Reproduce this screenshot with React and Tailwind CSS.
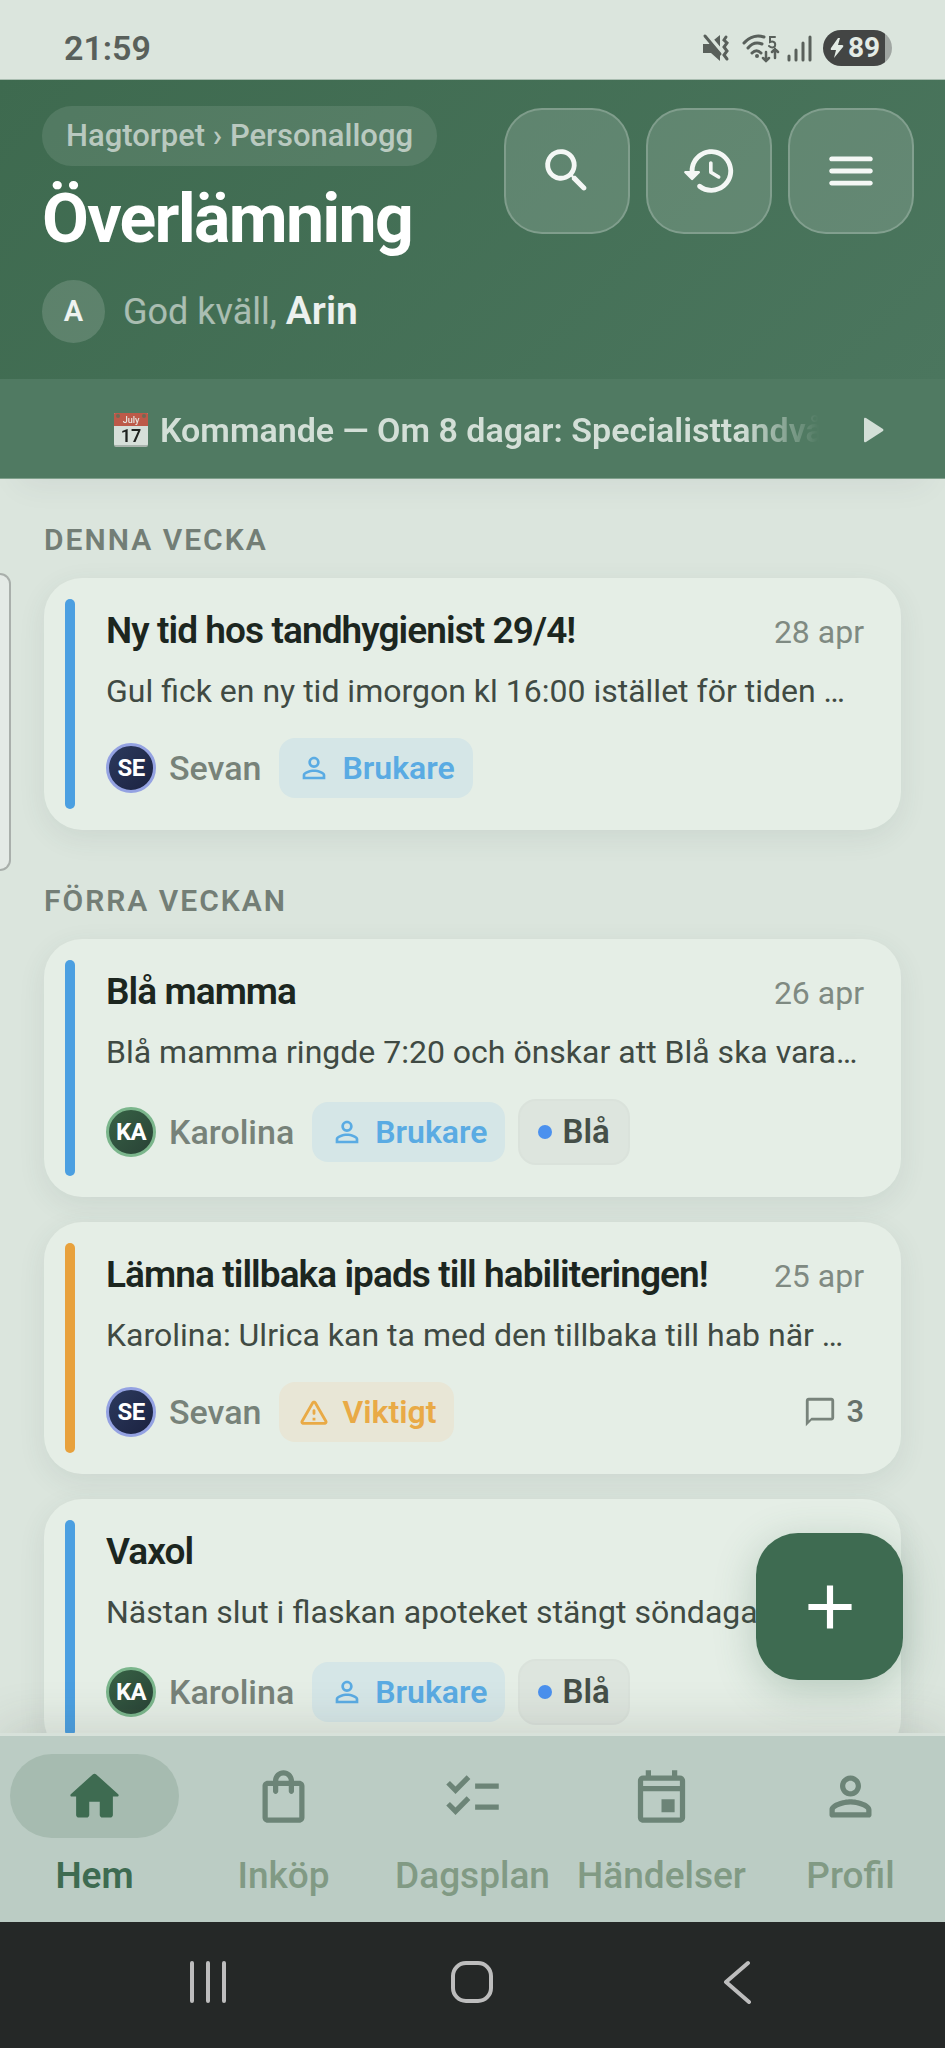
import { MdChatBubbleOutline, MdChecklist, MdOutlineShoppingBag, MdPersonOutline } from 'react-icons/md';
import clsx from 'clsx';

const Icon = ({ path, className }) => (
  <svg viewBox="0 0 24 24" fill="currentColor" aria-hidden="true" className={className}>
    <path d={path} />
  </svg>
);

const icons = {
  search: 'M15.5 14h-.79l-.28-.27c1.2-1.4 1.82-3.31 1.48-5.34-.47-2.78-2.79-5-5.59-5.34-4.23-.52-7.79 3.04-7.27 7.27.34 2.8 2.56 5.12 5.34 5.59 2.03.34 3.94-.28 5.34-1.48l.27.28v.79l4.25 4.25c.41.41 1.08.41 1.49 0 .41-.41.41-1.08 0-1.49L15.5 14zm-6 0C7.01 14 5 11.99 5 9.5S7.01 5 9.5 5 14 7.01 14 9.5 11.99 14 9.5 14z',
  history: 'M13.26 3C8.17 2.86 4 6.95 4 12H2.21c-.45 0-.67.54-.35.85l2.79 2.8c.2.2.51.2.71 0l2.79-2.8c.31-.31.09-.85-.36-.85H6c0-3.9 3.18-7.05 7.1-7 3.72.05 6.85 3.18 6.9 6.9.05 3.91-3.1 7.1-7 7.1-1.61 0-3.1-.55-4.28-1.48-.4-.31-.96-.28-1.32.08-.42.42-.39 1.13.08 1.49C9 20.29 10.91 21 13 21c5.05 0 9.14-4.17 9-9.26-.13-4.69-4.05-8.61-8.74-8.74zm-.51 5c-.41 0-.75.34-.75.75v3.68c0 .35.19.68.49.86l3.12 1.85c.36.21.82.09 1.03-.26.21-.36.09-.82-.26-1.03l-2.88-1.71v-3.4c0-.4-.34-.74-.75-.74z',
  menu: 'M4 18h16c.55 0 1-.45 1-1s-.45-1-1-1H4c-.55 0-1 .45-1 1s.45 1 1 1zm0-5h16c.55 0 1-.45 1-1s-.45-1-1-1H4c-.55 0-1 .45-1 1s.45 1 1 1zM3 7c0 .55.45 1 1 1h16c.55 0 1-.45 1-1s-.45-1-1-1H4c-.55 0-1 .45-1 1z',
  home: 'M10 19v-5h4v5c0 .55.45 1 1 1h3c.55 0 1-.45 1-1v-7h1.7c.46 0 .68-.57.33-.87L12.67 3.6c-.38-.34-.96-.34-1.34 0l-8.36 7.53c-.34.3-.13.87.33.87H5v7c0 .55.45 1 1 1h3c.55 0 1-.45 1-1z',
  event: 'M19 4h-1V2h-2v2H8V2H6v2H5c-1.11 0-1.99.9-1.99 2L3 20c0 1.1.89 2 2 2h14c1.1 0 2-.9 2-2V6c0-1.1-.9-2-2-2zm0 16H5V10h14v10zm0-12H5V6h14v2zm-7 5h5v5h-5v-5z',
  profile: 'M12 6c1.1 0 2 .9 2 2s-.9 2-2 2-2-.9-2-2 .9-2 2-2m0 9c2.7 0 5.8 1.29 6 2v1H6v-.99c.2-.72 3.3-2.01 6-2.01m0-11C9.79 4 8 5.79 8 8s1.79 4 4 4 4-1.79 4-4-1.79-4-4-4zm0 9c-2.67 0-8 1.34-8 4v2c0 .55.45 1 1 1h14c.55 0 1-.45 1-1v-2c0-2.66-5.33-4-8-4z',
  warning: 'M12 5.99 19.53 19H4.47L12 5.99M2.74 18c-.77 1.33.19 3 1.73 3h15.06c1.54 0 2.5-1.67 1.73-3L13.73 4.99c-.77-1.33-2.69-1.33-3.46 0L2.74 18zM11 11v2c0 .55.45 1 1 1s1-.45 1-1v-2c0-.55-.45-1-1-1s-1 .45-1 1zm0 5h2v2h-2z',
  add: 'M19 13h-6v6h-2v-6H5v-2h6V5h2v6h6v2z',
};

const people = {
  Sevan: { initials: 'SE', color: 'border-[#94a2e2] bg-linear-to-br from-[#2c3a5e] to-[#1b2240]' },
  Karolina: { initials: 'KA', color: 'border-[#7bb68c] bg-linear-to-br from-[#376245] to-[#294236]' },
};

const sections = [
  {
    label: 'Denna vecka',
    posts: [
      { id: 1, title: 'Ny tid hos tandhygienist 29/4!', date: '28 apr', text: 'Gul fick en ny tid imorgon kl 16:00 istället för tiden …', author: 'Sevan', tag: 'Brukare' },
    ],
  },
  {
    label: 'Förra veckan',
    posts: [
      { id: 2, title: 'Blå mamma', date: '26 apr', text: 'Blå mamma ringde 7:20 och önskar att Blå ska vara…', author: 'Karolina', tag: 'Brukare', client: 'Blå' },
      { id: 3, title: 'Lämna tillbaka ipads till habiliteringen!', date: '25 apr', text: 'Karolina: Ulrica kan ta med den tillbaka till hab när …', author: 'Sevan', tag: 'Viktigt', comments: 3 },
      { id: 4, title: 'Vaxol', date: '', text: 'Nästan slut i flaskan apoteket stängt söndagar', author: 'Karolina', tag: 'Brukare', client: 'Blå' },
    ],
  },
];

const StatusBar = () => (
  <div className="flex h-20 shrink-0 items-center justify-between border-b border-[#a9bdb0] pr-[53px] pl-[64px] pt-[16px] text-[#59605b]">
    <span className="text-[34px] leading-[40px] font-semibold">21:59</span>
    <div className="flex items-center">
      <svg viewBox="0 0 110 36" className="mr-[11px] h-[36px] w-[110px]" fill="none" stroke="currentColor" strokeLinecap="round" aria-hidden="true">
        {/* muted speaker with vibration marks */}
        <path d="M1 14h6l11-9v26l-9-8H1z" fill="currentColor" stroke="none" />
        <path d="M4 3l16 19" stroke="#dbe5dd" strokeWidth="4" />
        <path d="M3 6l15 18" strokeWidth="3" />
        <path d="M24 7l-2 3 3 3-3 4 3 4-3 4 3 4" strokeWidth="3" />
        {/* wifi 5 */}
        <path d="M42 13c6-7 14-8 20-6M46 18c4-5 9-6 14-4M50 23c3-3 6-3 9 0" strokeWidth="3" />
        <circle cx="55" cy="26" r="2" fill="currentColor" stroke="none" />
        <path d="M73 7h-5v5c3-1 6 0 5 4-1 2-4 2-6 0" strokeWidth="2" />
        <path d="M64 22v9m-3-3l3 3 3-3M73 28v-9m-3 3l3-3 3 3" strokeWidth="2.5" />
        {/* signal */}
        <path d="M87 26v4M94 20v10M101 13v17M108 7v23" strokeWidth="3" />
      </svg>
      <div className="flex h-[36px] w-[69px] items-center gap-[4px] overflow-hidden rounded-full bg-linear-to-r from-[#434544] from-90% to-[#a0a6a2] to-90% pl-[7px] text-[#e3ebe5]">
        <svg viewBox="0 0 14 20" className="h-[20px] w-[14px]" fill="currentColor" aria-hidden="true">
          <path d="M8 0L1 10q-1 2 1 2h4l-2 8 9-11q1-2-1-2H8l2-7z" />
        </svg>
        <span className="text-[28px] leading-[36px] font-bold">89</span>
      </div>
    </div>
  </div>
);

const HeaderButton = ({ icon, label }) => (
  <button
    type="button"
    aria-label={label}
    className="flex size-[126px] items-center justify-center rounded-[38px] border-2 border-white/20 bg-white/15 text-[#f4f7f5]"
  >
    <Icon path={icon} className="size-[58px]" />
  </button>
);

const Header = () => (
  <header className="flex shrink-0 items-start justify-between bg-linear-135 from-[#3e6a4f] to-[#4b765e] pt-[26px] pr-[31px] pb-9 pl-[42px]">
    <div>
      <a href="#personallogg" className="block w-fit rounded-full bg-white/10 px-6 text-[31px] leading-[60px] font-medium text-white/60">
        Hagtorpet › Personallogg
      </a>
      <h1 className="mt-3 text-[68px] leading-[82px] font-bold tracking-tight text-white">Överlämning</h1>
      <div className="mt-5 flex items-center gap-[18px]">
        <span className="flex size-[63px] items-center justify-center rounded-full bg-white/15 text-[29px] font-semibold text-white/90">A</span>
        <p className="text-[36px] leading-[48px] text-white/55">
          God kväll, <strong className="text-[39px] font-semibold text-white/90">Arin</strong>
        </p>
      </div>
    </div>
    <div className="mt-[2px] flex gap-4">
      <HeaderButton icon={icons.search} label="Sök" />
      <HeaderButton icon={icons.history} label="Historik" />
      <HeaderButton icon={icons.menu} label="Meny" />
    </div>
  </header>
);

const Ticker = () => (
  <div className="relative flex h-[100px] shrink-0 items-center border-b border-[#80a08c] bg-[#507a62] pt-[2px] pr-[51px] pl-[42px] text-[#d3dfd7] shadow-[0_24px_32px_-20px_rgba(60,70,90,0.08)]">
    <div className="flex min-w-0 flex-1 items-center gap-3 overflow-hidden pl-[72px] [mask-image:linear-gradient(to_right,black_90%,transparent)]">
      <svg viewBox="0 0 34 34" className="size-[34px] shrink-0" aria-hidden="true">
        <rect x="0" y="2" width="34" height="32" rx="2" fill="#a9b4ad" />
        <rect x="0" y="0" width="34" height="32" rx="1" fill="#d6dfd9" />
        <path d="M0 1q0-1 1-1h32q1 0 1 1v12H0z" fill="#bd5a49" />
        <circle cx="4" cy="3" r="2" fill="#6f6a55" />
        <circle cx="30" cy="3" r="2" fill="#6f6a55" />
        <text x="17" y="10" textAnchor="middle" fontSize="9" fontWeight="500" fill="#e6e6e0">July</text>
        <text x="17" y="29" textAnchor="middle" fontSize="18" fontWeight="600" fill="#1d211e">17</text>
      </svg>
      <span className="text-[34px] leading-[48px] font-semibold whitespace-nowrap">
        Kommande — Om 8 dagar: Specialisttandvård
      </span>
    </div>
    <button type="button" aria-label="Nästa" className="ml-[35px] flex h-[48px] w-[40px] shrink-0 items-center justify-center">
      <svg viewBox="0 0 20 26" className="h-[26px] w-[20px]" fill="currentColor">
        <path d="M0 2q0-2 2-1l17 11q1 1 0 2L2 25q-2 1-2-1z" />
      </svg>
    </button>
  </div>
);

const Tag = ({ kind }) => (
  <span
    className={clsx(
      'flex h-[60px] items-center gap-[11px] rounded-[16px] px-[18px] text-[32px] font-semibold',
      kind === 'Viktigt' ? 'bg-[#e8e6d6] text-[#e9aa46]' : 'bg-[#d5e6e7] text-[#5aabe3]'
    )}
  >
    {kind === 'Viktigt' ? <Icon path={icons.warning} className="size-[34px]" /> : <MdPersonOutline className="size-[34px]" />}
    {kind}
  </span>
);

const PostCard = ({ post }) => {
  const person = people[post.author];
  return (
    <article className="flex rounded-[38px] bg-[#e5eee6] pr-[37px] pl-[21px] shadow-[0_8px_28px_rgba(60,80,80,0.09)]">
      <div className={clsx('my-[21px] w-[10px] shrink-0 rounded-full', post.tag === 'Viktigt' ? 'bg-[#e8a13c]' : 'bg-[#4b9fe1]')} />
      <div className="min-w-0 flex-1 pt-[29px] pb-8 pl-[31px]">
        <div className="flex h-[48px] items-baseline justify-between">
          <h3 className="truncate text-[37px] leading-[48px] font-semibold tracking-tight text-[#1c261f]">{post.title}</h3>
          <time className="shrink-0 text-[32px] leading-[48px] text-[#7f8a82]">{post.date}</time>
        </div>
        <p className="mt-3 truncate text-[32px] leading-[48px] text-[#404a43]">{post.text}</p>
        <div className="mt-[23px] flex items-center">
          <span className={clsx('flex size-[50px] shrink-0 items-center justify-center rounded-full border-3 text-[24px] font-bold tracking-tight text-white', person.color)}>
            {person.initials}
          </span>
          <span className="mr-[18px] ml-[13px] text-[34px] leading-[48px] font-medium text-[#778279]">{post.author}</span>
          <Tag kind={post.tag} />
          {post.client && (
            <span className="ml-[13px] flex h-[66px] items-center gap-[10px] rounded-[18px] border-2 border-[#dae2db] bg-[#dde5de] px-[18px] text-[33px] font-semibold text-[#454f48]">
              <span className="size-[14px] rounded-full bg-[#4b91ee]" />
              {post.client}
            </span>
          )}
          {post.comments && (
            <span className="ml-auto flex items-center gap-[9px] text-[31px] font-medium text-[#66716a]">
              <MdChatBubbleOutline className="size-[34px] text-[#78837b]" />
              {post.comments}
            </span>
          )}
        </div>
      </div>
    </article>
  );
};

const tabs = [
  { label: 'Hem', icon: <Icon path={icons.home} className="size-[63px]" />, active: true },
  { label: 'Inköp', icon: <MdOutlineShoppingBag className="size-[63px]" /> },
  { label: 'Dagsplan', icon: <MdChecklist className="size-[63px]" /> },
  { label: 'Händelser', icon: <Icon path={icons.event} className="size-[63px]" /> },
  { label: 'Profil', icon: <Icon path={icons.profile} className="size-[63px]" /> },
];

const BottomNav = () => (
  <nav className="relative grid shrink-0 grid-cols-5 border-t-3 border-[#d7e1da] bg-[#bbccc4] pt-[18px] pb-[22px] shadow-[0_-8px_44px_rgba(60,60,50,0.14)]">
    {tabs.map((tab) => (
      <button key={tab.label} type="button" className={clsx('px-[10px]', tab.active ? 'text-[#3e6b51]' : 'text-[#6c8477]')}>
        <span className={clsx('flex h-[84px] items-center justify-center rounded-full', tab.active && 'bg-[#a6bbb0]')}>{tab.icon}</span>
        <span className={clsx('mt-[14px] flex justify-center text-[37px] leading-[48px]', tab.active ? 'font-semibold' : 'font-medium text-[#819a84]')}>
          {tab.label}
        </span>
      </button>
    ))}
  </nav>
);

const SystemNav = () => (
  <div className="relative grid h-[126px] shrink-0 grid-cols-3 items-center bg-[#252827] px-[76px] pb-[6px] text-[#bdbdbd]">
    <button type="button" aria-label="Senaste appar" className="flex justify-center">
      <svg viewBox="0 0 44 44" className="size-11" fill="none" stroke="currentColor" strokeWidth="4" strokeLinecap="round">
        <path d="M6 3v38M22 3v38M38 3v38" />
      </svg>
    </button>
    <button type="button" aria-label="Hemskärm" className="flex justify-center">
      <svg viewBox="0 0 44 44" className="size-11" fill="none" stroke="currentColor" strokeWidth="4">
        <rect x="3" y="3" width="38" height="38" rx="13" />
      </svg>
    </button>
    <button type="button" aria-label="Tillbaka" className="flex justify-center">
      <svg viewBox="0 0 44 44" className="size-11" fill="none" stroke="currentColor" strokeWidth="4" strokeLinecap="round" strokeLinejoin="round">
        <path d="M33 3L11 22l23 20" />
      </svg>
    </button>
  </div>
);

export default function App() {
  return (
    <div className="relative flex h-screen flex-col overflow-hidden bg-[#dbe5dd] font-['Roboto',sans-serif]">
      <StatusBar />
      <Header />
      <Ticker />
      <main className="min-h-0 flex-1 overflow-y-auto px-11 pt-[41px] [scrollbar-width:none]">
        {sections.map((section) => (
          <section key={section.label} className="mb-[51px]">
            <h2 className="mb-[18px] text-[30px] leading-[40px] font-semibold tracking-[2px] text-[#737e76] uppercase">{section.label}</h2>
            <div className="flex flex-col gap-[25px]">
              {section.posts.map((post) => (
                <PostCard key={post.id} post={post} />
              ))}
            </div>
          </section>
        ))}
      </main>
      <div className="relative">
        <button
          type="button"
          aria-label="Nytt inlägg"
          className="absolute right-[42px] bottom-[53px] flex size-[147px] items-center justify-center rounded-[42px] bg-[#3e6b51] text-white shadow-[0_10px_40px_rgba(62,107,81,0.28)]"
        >
          <Icon path={icons.add} className="size-[74px]" />
        </button>
      </div>
      <BottomNav />
      <SystemNav />
      {/* edge panel handle */}
      <div className="absolute top-[573px] left-0 h-[298px] w-[11px] rounded-r-[11px] border-2 border-l-0 border-[#a9afab] bg-[#e4eae6]" />
    </div>
  );
}
